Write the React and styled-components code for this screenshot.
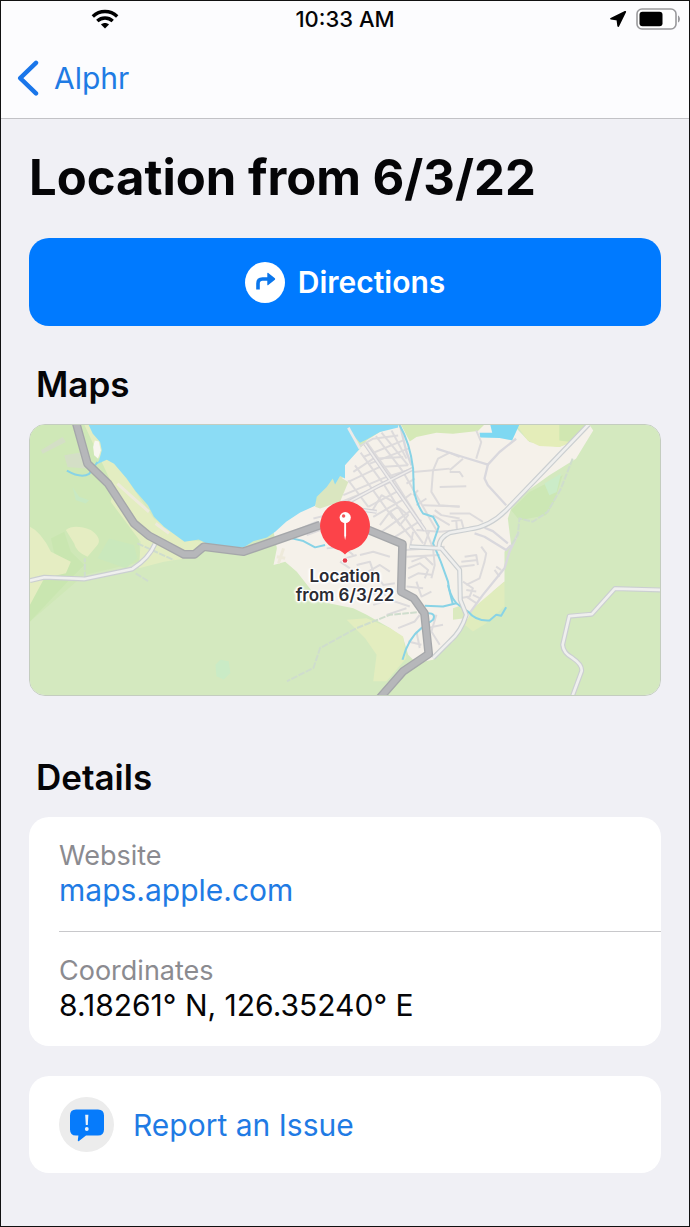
import React from 'react'
import styled, {createGlobalStyle} from 'styled-components'

const GlobalStyle = createGlobalStyle`
    * {
        box-sizing: border-box;
    }

    body {
        margin: 0;
        background: #f0f0f5;
        font-family: Inter, "Liberation Sans", sans-serif;
        color: #050507;
    }
`;

const Screen = styled.div`
    min-height: 100vh;
    border: 1px solid #111;
    background: #f0f0f5;
`;

const Header = styled.header`
    background: #fcfcfe;
    border-bottom: 1px solid #c2c2c6;
`;

const StatusBar = styled.div`
    display: grid;
    grid-template-columns: 1fr auto 1fr;
    align-items: center;
    height: 36px;
`;

const StatusGroup = styled.div`
    display: flex;
    align-items: center;
    justify-content: ${props => props.$end ? 'flex-end' : 'flex-start'};
    gap: 9px;
    padding: ${props => props.$end ? '0 8px 0 0' : '0 0 0 90px'};
`;

const Time = styled.time`
    font-size: 22px;
    line-height: 36px;
    font-weight: 500;
`;

const Nav = styled.nav`
    display: flex;
    align-items: center;
    height: 81px;
    padding: 0 15px;
`;

const BackLink = styled.a`
    display: flex;
    align-items: center;
    gap: 14px;
    font-size: 30px;
    line-height: 40px;
    color: #1f7be4;
    text-decoration: none;
`;

const Main = styled.main`
    padding: 29px 28px 52px;
`;

const Title = styled.h1`
    margin: 0 0 30px;
    font-size: 49px;
    line-height: 60px;
    font-weight: 700;
`;

const DirectionsButton = styled.button`
    display: flex;
    align-items: center;
    justify-content: center;
    gap: 13px;
    width: 100%;
    height: 88px;
    border: 0;
    border-radius: 20px;
    background: #007aff;
    color: #fff;
    font-family: inherit;
    font-size: 30px;
    font-weight: 600;
    cursor: pointer;
`;

const SectionTitle = styled.h2`
    margin: ${props => props.$top}px 0 18px 7px;
    font-size: 35px;
    line-height: 44px;
    font-weight: 600;
`;

const MapCard = styled.div`
    position: relative;
    height: 272px;
    border: 1px solid #c4cdbf;
    border-radius: 16px;
    overflow: hidden;

    > svg {
        display: block;
        width: 100%;
        height: 100%;
    }
`;

const Marker = styled.div`
    position: absolute;
    top: 75px;
    left: 0;
    right: 0;
    display: flex;
    flex-direction: column;
    align-items: center;
    gap: 2px;
`;

const MarkerLabel = styled.div`
    width: 120px;
    text-align: center;
    font-size: 17px;
    line-height: 19px;
    font-weight: 600;
    color: #2b2b33;
    text-shadow: 0 0 2px #fff, 1px 1px 1px #fff, -1px -1px 1px #fff,
        1px -1px 1px #fff, -1px 1px 1px #fff, 0 0 3px #fff,
        2px 0 2px #fff, -2px 0 2px #fff, 0 2px 2px #fff;
`;

const Card = styled.div`
    border-radius: 20px;
    background: #fff;
    overflow: hidden;
`;

const DetailList = styled.dl`
    margin: 0;
    padding-left: 30px;
`;

const DetailRow = styled.div`
    padding: 21px 0 23px;
    border-top: ${props => props.$divided ? '1px solid #c8c8cb' : '0'};
`;

const DetailName = styled.dt`
    font-size: 27px;
    line-height: 35px;
    color: #8b8b90;
`;

const DetailValue = styled.dd`
    margin: 0;
    font-size: 30px;
    line-height: 35px;

    a {
        color: #1f7be4;
        text-decoration: none;
    }
`;

const ReportCard = styled(Card)`
    margin-top: 30px;
`;

const ReportButton = styled.button`
    display: flex;
    align-items: center;
    gap: 19px;
    width: 100%;
    padding: 21px 30px;
    border: 0;
    background: none;
    color: #1f7be4;
    font-family: inherit;
    font-size: 30px;
    text-align: left;
    cursor: pointer;
`;

const IconCircle = styled.span`
    display: flex;
    align-items: center;
    justify-content: center;
    width: 55px;
    height: 55px;
    border-radius: 50%;
    background: #ececec;
`;

const WifiIcon = () => (
    <svg width="28" height="20" viewBox="0 0 28 20" fill="none" stroke="#000" strokeWidth="3.4" aria-hidden="true">
        <path d="M1.8 7.400C8.800.8 19.200.8 26.200 7.400"/>
        <path d="M6.300 12c4.400-4 11-4 15.400 0"/>
        <path d="M14 19.600l-4-4.200c2.200-2 5.800-2 8 0z" fill="#000" stroke="none"/>
    </svg>
)

const LocationIcon = () => (
    <svg width="18" height="18" viewBox="0 0 18 18" aria-hidden="true">
        <path d="M16.200 1.800L2 8.700l6.400.9.800 6.400z" fill="#000" stroke="#000" strokeWidth="1.800" strokeLinejoin="round"/>
    </svg>
)

const BatteryIcon = () => (
    <svg width="45" height="22" viewBox="0 0 45 22" aria-hidden="true">
        <rect x="1" y="1" width="39" height="20" rx="5" fill="#fff" stroke="#99999c" strokeWidth="1.600"/>
        <rect x="3.500" y="3.800" width="23" height="14.400" rx="3" fill="#000"/>
        <path d="M42 7.500c2.600 1 2.600 6 0 7z" fill="#99999c"/>
    </svg>
)

const BackIcon = () => (
    <svg width="24" height="36" viewBox="0 0 24 36" fill="none" aria-hidden="true">
        <path d="M20 2.800L4.200 18.200 20 33.400" stroke="#1a76ea" strokeWidth="4.400" strokeLinecap="round" strokeLinejoin="round"/>
    </svg>
)

const TurnIcon = () => (
    <svg width="40" height="41" viewBox="0 0 40 41" aria-hidden="true">
        <ellipse cx="20" cy="20.500" rx="20" ry="20.500" fill="#fff"/>
        <path d="M13 27.500v-6q0-4.500 4.500-4.500H24" fill="none" stroke="#0a76ec" strokeWidth="3.600"/>
        <path d="M22.300 11.300v11.400c0 .6.6.8 1 .4l6.600-5.400c.4-.4.4-1 0-1.400l-6.600-5.400c-.4-.4-1-.2-1 .4z" fill="#0a76ec"/>
    </svg>
)

const IssueIcon = () => (
    <svg width="34" height="34" viewBox="0 0 34 34" aria-hidden="true">
        <path d="M6 1.500h22q6 0 6 6v14q0 6-6 6H16l-7 5.600c-.7.500-1.300.2-1.200-.6l.6-5H6q-6 0-6-6v-14q0-6 6-6z" fill="#067bfb"/>
        <path d="M15.200 6.800h3.200l-.6 10.200h-2z" fill="#e8f1fb"/>
        <circle cx="16.800" cy="21" r="1.900" fill="#e8f1fb"/>
    </svg>
)

const PinIcon = () => (
    <svg width="54" height="65" viewBox="0 0 54 65" aria-hidden="true">
        <path d="M27 1a25 25 0 0 1 9.500 48.100c-3.500 1.300-6 1.800-9.500 5.400-3.500-3.600-6-4.100-9.500-5.400A25 25 0 0 1 27 1z" fill="#fc4349"/>
        <path d="M26.200 18h1.900v17.500L27.100 40l-.9-4.500z" fill="#fff"/>
        <circle cx="27.200" cy="17.600" r="5.600" fill="#fff"/>
        <circle cx="25.600" cy="16" r="1.700" fill="#f0555a"/>
        <circle cx="27" cy="60.500" r="3.200" fill="#fff" opacity=".7"/>
        <circle cx="27" cy="60.500" r="2.300" fill="#e23b4a"/>
    </svg>
)

// narrow residential streets
const streets = [
    'M1040 80L1120 190 1220 350 1240 400',
    'M1068 62L1150 170 1250 345',
    'M1022 112L1090 205 1150 300 1210 385',
    'M1085 52L1165 150',
    'M1005 150L1070 240 1120 310',
    'M985 195L1045 275',
    'M1115 45L1160 130',
    'M1020 92L1060 70 1135 60',
    'M1030 125L1150 75',
    'M1050 145L1165 100',
    'M1000 170L1060 130 1150 125',
    'M985 200L1080 155 1165 150',
    'M970 240L1100 185 1165 165',
    'M960 262L1125 195',
    'M1045 275L1140 225',
    'M1060 305L1155 250 1175 235',
    'M1085 350L1175 285',
    'M1110 375L1205 315',
    'M1055 290L1085 240 1130 265',
    'M1110 290L1135 275 1165 300 1140 330z',
    'M1080 330L1110 290 1180 375',
    'M1160 205L1185 190M1180 240L1195 225M1190 270L1220 250',
    'M1180 170L1240 165 1290 160',
    'M1240 165L1235 230 1260 270 1320 275',
    'M1240 165L1255 130 1290 112 1320 125',
    'M1260 215L1340 213',
    'M1210 270L1320 274M1245 285L1265 300 1320 310',
    'M1240 300L1290 330M1290 295L1350 295 1390 320',
    'M1295 318L1325 315 1332 340M1310 318L1312 345',
    'M1190 345L1260 350 1320 345',
    'M1180 350L1170 400M1230 345L1210 400',
    'M1155 405L1235 400 1275 395',
    'M1160 425L1260 420M1175 440L1215 425 1240 450',
    'M1165 460L1200 445 1225 465 1215 490',
    'M1165 490L1195 475 1240 480M1160 515L1210 520',
    'M1190 500L1205 545 1235 530M1175 535L1190 560',
    'M1240 400L1245 450 1235 490',
    'M1020 420L1060 410 1110 425M1010 450L1050 440 1060 470',
    'M1045 470L1080 450 1110 470M1070 480L1090 510 1125 505',
    'M1040 545L1080 530 1125 560M1060 570L1110 555 1170 575',
    'M1100 600L1160 580M1135 640L1185 620 1200 600',
    'M1250 600L1235 650 1260 690M1220 640L1270 630',
    'M1165 680L1205 690M1190 650L1200 700',
    'M830 345L890 320 930 335M860 360L900 345 940 365',
    'M880 310L920 300M920 400L970 395 1000 420',
    'M960 440L990 460M975 430L1010 420',
    'M1335 425L1370 420 1375 450M1325 440L1375 435M1320 455L1365 450',
    'M1385 395L1400 415 1395 440 1380 490 1340 510',
    'M1330 500L1360 520 1350 545 1320 550M1340 525L1370 530',
    'M1360 540L1380 550M1340 545L1370 565',
    'M1425 465L1440 485M1430 455L1445 465',
    'M1330 130L1290 165M1290 170L1320 170 1330 185',
    'M1370 45L1385 80 1370 130',
]

// roads that link the town with its outskirts
const roads = [
    'M1250 100L1330 125 1405 148 1440 110 1490 70',
    'M1405 148L1395 190 1405 210 1460 270',
    'M1365 355L1395 365 1460 405 1475 390',
    'M1350 595L1390 540 1455 460 1470 410 1498 350',
    'M1395 338L1420 348 1465 385',
    'M1140 27L1160 110 1175 150',
]

const mainRoads = [
    'M27 497L70 487 190 492 335 462Q385 430 403 387',
    'M1708 27L1590 150 1460 285Q1410 335 1350 342L1290 353Q1255 370 1258 400',
    'M1170 395L1265 400 1320 465 1322 555 1340 600Q1325 650 1290 680L1240 730',
    'M1923 525L1787 521 1718 598 1650 604 1630 690Q1632 715 1660 730Q1690 750 1687 770L1660 843',
]

const rivers = [
    'M1138 27Q1170 80 1180 160L1182 225Q1192 270 1210 295L1240 305 1257 335 1240 385Q1265 440 1285 500Q1288 540 1310 565L1270 575 1215 573',
    'M1225 595Q1250 595 1240 615L1205 640Q1165 670 1148 735',
    'M1310 565L1345 590Q1370 620 1410 617L1430 600 1445 603 1460 577',
    'M815 370L850 378 885 397 915 390',
    'M138 166Q180 190 205 176L230 140',
    'M1285 510L1300 570',
]

const highways = [
    'M165 20L200 145 262 205 340 325 385 362 490 418 522 418 550 395 670 410 900 330',
    'M1035 340L1148 387 1144 530 1182 550 1214 595 1227 718 1150 770 1080 850',
]

const Terrain = () => (
    <svg viewBox="27 27 1896 816" preserveAspectRatio="xMidYMid slice" fill="none" role="img" aria-label="Map">
        <rect x="27" y="27" width="1896" height="816" fill="#d4e9bf"/>
        <path d="M27 27H200L350 320 360 440 190 480 27 620z" fill="#cfe8b7"/>
        <path d="M90 370L130 350 150 410 190 450 150 490 27 620V530L110 460z" fill="#c9e6b0"/>
        <path d="M27 335Q60 350 90 410L150 440 135 475 70 490 27 570z" fill="#e5edc2"/>
        <path d="M135 345Q160 325 210 345 245 370 230 390L200 425Q165 410 160 385z" fill="#e5edc2"/>
        <path d="M190 27H215L300 165 400 310 490 375 560 380 530 425 430 440 355 460 360 380 270 260 280 220z" fill="#e3edc1"/>
        <path d="M265 370L340 390 350 430 315 460 230 430z" fill="#cae8bc"/>
        <path d="M130 120L190 110 195 160 140 155z" fill="#d4dfc6"/>
        <path d="M585 750L600 735 625 740 630 775 610 795 588 785z" fill="#caebc6"/>
        <path d="M155 215L175 245 205 255 195 265 165 255z" fill="#c8e9c3"/>
        <path d="M60 105L125 65 135 80 65 115z" fill="#d4dfc6"/>
        <path d="M770 345L900 250 930 200 980 170 990 260 880 330z" fill="#dce8bf"/>

        {/* built-up area */}
        <path d="M760 350L795 320 840 290 885 270 910 240 970 185 970 150 1020 100 1040 75 1080 50 1135 27H1480L1530 80 1620 95 1665 75 1710 27 1722 45 1670 130 1590 180 1520 230 1475 280 1465 310 1475 390 1455 410V500L1420 530 1360 600 1335 620 1300 680 1240 735 1190 745 1165 720 1150 670 1110 640 1040 600 1000 580 900 560 830 470 795 440 760 450 770 400z" fill="#f5f1ea"/>
        <path d="M1143 27H1395L1375 47 1300 55 1250 52 1190 65 1170 78z" fill="#d5e9b7"/>
        <path d="M1490 27H1705L1670 75 1620 95 1560 92 1525 75z" fill="#e4edb9"/>
        <path d="M1620 27H1700L1655 80 1620 75z" fill="#d0e7b1"/>
        <path d="M885 275L895 240 925 205 960 185 985 200 960 260 900 280z" fill="#dae6c0"/>
        <path d="M1455 500V575L1400 625 1360 650 1335 630 1360 580z" fill="#e0ecbd"/>
        <path d="M1300 580L1330 570 1335 610 1300 615z" fill="#dbeac0"/>
        <path d="M980 615L1040 610 1110 640 1150 665 1160 730 1100 800 1060 800 1070 720 1035 670z" fill="#e3edbf"/>
        <path d="M1475 285L1530 230 1590 200 1630 180 1605 260 1580 300 1500 315z" fill="#cce7b4"/>
        <path d="M1575 205L1625 175 1612 230 1590 240z" fill="#cbecc8"/>

        {/* lake */}
        <path d="M203 27L216 55 238 80 243 105 235 135 225 148 258 133 280 145 305 175 318 190 345 228 382 270 400 305 430 335 460 357 492 380 535 373 560 386 630 397 672 396 700 378 740 367 765 350 798 320 840 292 885 272 890 245 920 215 938 190 945 208 960 182 975 190 975 150 1018 102 1005 75 985 42 1020 82 1040 72 1080 50 1135 36V27z" fill="#8bdcf5"/>
        <path d="M1412 27H1500L1478 75 1440 68 1382 66 1380 52 1418 52z" fill="#7ed8f2"/>
        <path d="M222 75L234 78 240 105 232 130 220 120 217 95z" fill="#f8f6f0"/>
        <path d="M290 205L340 250 385 290M405 325L445 355M790 400L775 445M770 425L795 430" stroke="#eeeadb" strokeWidth="9"/>
        <path d="M985 37L1020 100" stroke="#eceae9" strokeWidth="8"/>

        <g stroke="#dddbdc" strokeWidth="6" strokeLinejoin="round">
            {streets.map(d => <path key={d} d={d}/>)}
        </g>
        <path d="M1035 85L1215 345M1070 290L960 275 1070 215 1180 160" stroke="#d3d2d6" strokeWidth="12"/>
        <path d="M1035 85L1215 345M1070 290L960 275 1070 215 1180 160" stroke="#efedeb" strokeWidth="5"/>
        <g stroke="#d9d8dd" strokeWidth="7" strokeLinejoin="round">
            {roads.map(d => <path key={d} d={d}/>)}
        </g>
        <path d="M1660 130L1625 220 1585 290 1540 320 1500 310 1495 360 1475 390M192 490V430M350 385L460 435M345 475L385 500M1215 590L1110 600 1010 640 900 700 880 760 800 800" stroke="#cfddcd" strokeWidth="6" strokeDasharray="20 4"/>
        <g stroke="#88d3e6" strokeWidth="6" strokeLinejoin="round">
            {rivers.map(d => <path key={d} d={d}/>)}
        </g>
        <g stroke="#cbcfd1" strokeWidth="15" strokeLinejoin="round">
            {mainRoads.map(d => <path key={d} d={d}/>)}
        </g>
        <g stroke="#efefee" strokeWidth="8" strokeLinejoin="round">
            {mainRoads.map(d => <path key={d} d={d}/>)}
        </g>
        <g stroke="#a5a7aa" strokeWidth="26" strokeLinejoin="round">
            {highways.map(d => <path key={d} d={d}/>)}
        </g>
        <g stroke="#b6b7ba" strokeWidth="18" strokeLinejoin="round">
            {highways.map(d => <path key={d} d={d}/>)}
        </g>
    </svg>
)

export default function App() {
    return (
        <Screen>
            <GlobalStyle/>
            <Header>
                <StatusBar>
                    <StatusGroup>
                        <WifiIcon/>
                    </StatusGroup>
                    <Time>10:33 AM</Time>
                    <StatusGroup $end>
                        <LocationIcon/>
                        <BatteryIcon/>
                    </StatusGroup>
                </StatusBar>
                <Nav>
                    <BackLink href="#">
                        <BackIcon/>
                        Alphr
                    </BackLink>
                </Nav>
            </Header>
            <Main>
                <Title>Location from 6/3/22</Title>
                <DirectionsButton type="button">
                    <TurnIcon/>
                    Directions
                </DirectionsButton>

                <SectionTitle $top={36}>Maps</SectionTitle>
                <MapCard>
                    <Terrain/>
                    <Marker>
                        <PinIcon/>
                        <MarkerLabel>Location<br/>from 6/3/22</MarkerLabel>
                    </Marker>
                </MapCard>

                <SectionTitle $top={59}>Details</SectionTitle>
                <Card>
                    <DetailList>
                        <DetailRow>
                            <DetailName>Website</DetailName>
                            <DetailValue><a href="#website">maps.apple.com</a></DetailValue>
                        </DetailRow>
                        <DetailRow $divided>
                            <DetailName>Coordinates</DetailName>
                            <DetailValue>8.18261° N, 126.35240° E</DetailValue>
                        </DetailRow>
                    </DetailList>
                </Card>
                <ReportCard>
                    <ReportButton type="button">
                        <IconCircle>
                            <IssueIcon/>
                        </IconCircle>
                        Report an Issue
                    </ReportButton>
                </ReportCard>
            </Main>
        </Screen>
    )
}
